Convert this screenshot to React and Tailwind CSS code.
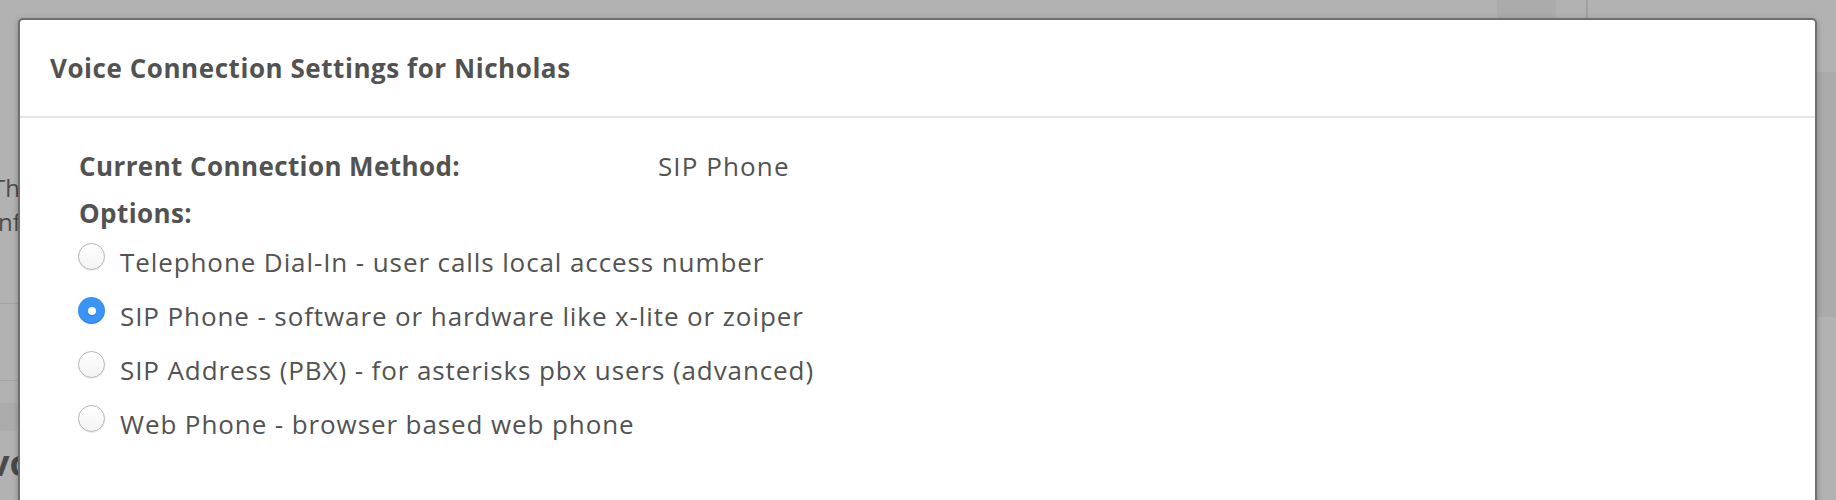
import React, { useState } from 'react';

const options = [
  { id: 'dialin', label: 'Telephone Dial-In - user calls local access number' },
  { id: 'sip', label: 'SIP Phone - software or hardware like x-lite or zoiper' },
  { id: 'pbx', label: 'SIP Address (PBX) - for asterisks pbx users (advanced)' },
  { id: 'web', label: 'Web Phone - browser based web phone' },
];

const Radio = ({ checked }) => {
  if (checked) {
    return (
      <span className="-ml-[1px] -mt-[3px] flex h-[27px] w-[27px] shrink-0 items-center justify-center rounded-full bg-[#3a94f8] shadow-[inset_0_-1px_1px_rgba(0,0,0,0.15)]">
        <span className="h-[8px] w-[8px] rounded-full bg-white shadow-[0_1px_1px_rgba(0,0,0,0.2)]"></span>
      </span>
    );
  }
  return (
    <span className="-ml-[1px] -mt-[3px] h-[27px] w-[27px] shrink-0 rounded-full border border-[#b4b4b4] bg-gradient-to-b from-white to-[#f3f3f3] shadow-[0_1px_1px_rgba(0,0,0,0.08)]"></span>
  );
};

const App = () => {
  const [method, setMethod] = useState('sip');

  return (
    <div className="relative h-[500px] w-full overflow-hidden bg-white font-['Open_Sans',sans-serif]">
      {/* page behind the modal */}
      <div className="flex h-full flex-col">
        <div className="flex h-[18px] shrink-0">
          <div className="w-[1497px]"></div>
          <div className="w-[59px] bg-[#f5f5f5]"></div>
          <div className="w-[30px]"></div>
          <div className="w-[2px] bg-[#e6e6e6]"></div>
        </div>
        <div className="flex flex-1">
          <div className="flex-1">
            <div className="-ml-[8px] pt-[153px] text-[24px] leading-[34px] text-[#6e6e6e]">
              <p>This page lets you manage users</p>
              <p>information and settings</p>
            </div>
            <div className="h-[65px] border-b border-[#ececec]"></div>
            <div className="h-[77px] border-b border-[#ececec]"></div>
            <div className="h-[22px]"></div>
            <div className="h-[28px] bg-[#f6f6f6]"></div>
            <p className="-ml-[11px] mt-[8px] text-[36px] font-bold leading-[48px] text-[#6a6a6a]">voice</p>
          </div>
          <div className="w-[19px]">
            <div className="h-[54px]"></div>
            <div className="h-[245px] bg-[#f5f5f5]"></div>
          </div>
        </div>
      </div>

      <div className="absolute inset-0 bg-black/30"></div>

      {/* modal */}
      <div className="absolute left-[18px] right-[19px] top-[18px] h-[560px] rounded-[5px] border-2 border-[#6f6f6f] bg-white shadow-[0_2px_6px_rgba(0,0,0,0.25)]">
        <div className="flex h-[96px] items-center px-[30px]">
          <h2 className="text-[26px] font-bold leading-[32px] tracking-[0.55px] text-[#525252]">Voice Connection Settings for Nicholas</h2>
        </div>
        <div className="h-[2px] bg-[#e6e6e6]"></div>

        <div className="pl-[59px] pt-[32px] text-[26px] leading-[32px] tracking-[0.9px] text-[#525252]">
          <div className="flex">
            <span className="w-[579px] font-bold tracking-[0.4px]">Current Connection Method:</span>
            <span className="tracking-[1.1px]">SIP Phone</span>
          </div>
          <div className="mt-[15px] font-bold tracking-[0.4px]">Options:</div>
          <div className="mt-[17px] flex flex-col gap-[22px]">
            {options.map((opt) => (
              <label key={opt.id} className="flex cursor-pointer items-start gap-[15px]" onClick={() => setMethod(opt.id)}>
                <Radio checked={method === opt.id} />
                <span>{opt.label}</span>
              </label>
            ))}
          </div>
        </div>
      </div>
    </div>
  );
};

export default App;
